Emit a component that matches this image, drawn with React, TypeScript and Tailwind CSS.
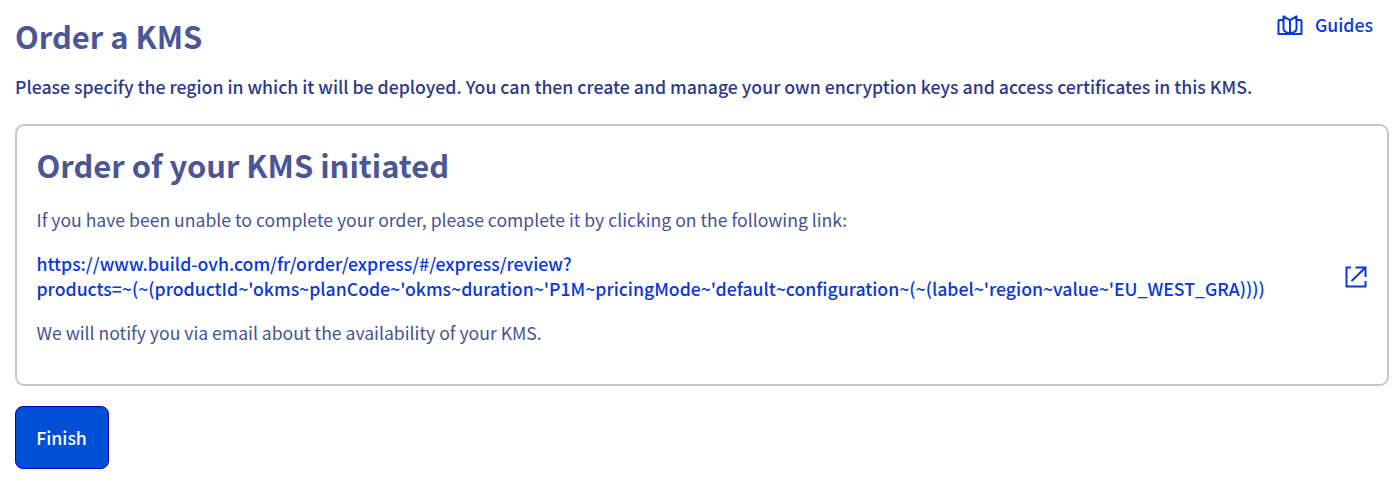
import React from "react";

function GuidesIcon() {
  return (
    <svg width="26" height="20" viewBox="0 0 26 20" fill="none" stroke="#0838d8" strokeWidth="2" strokeLinejoin="round" strokeLinecap="round">
      <path d="M6.500 5H2.500a1 1 0 0 0-1 1V19H24.500V6a1 1 0 0 0-1-1h-4" />
      <path d="M13 5.200 6.500 1.300V13.500c0 2.500 2 4 6.500 5 4.500-1 6.500-2.500 6.500-5V1.300L13 5.200V18" />
    </svg>
  );
}

function ExternalLinkIcon() {
  return (
    <svg width="22" height="22" viewBox="0 0 22 22" fill="none" stroke="#0838d8" strokeWidth="2">
      <path d="M6 1.500H1.500V20.500H20.500V15" />
      <path d="M10.500 1.500H20.500V11M20.500 1.500 6.500 15" />
    </svg>
  );
}

export default function App() {
  return (
    <main className="h-[492px] bg-white pl-[15px] pr-[11px] font-['Noto_Sans_CJK_SC',sans-serif] text-[#2b3a88]">
      <header className="flex items-start justify-between">
        <h1 className="pt-4 text-[30.9px] leading-10 font-bold text-[#4a5696]">Order a KMS</h1>
        <a className="mr-4 mt-[13px] flex items-center gap-3 text-[17.7px] leading-6 font-medium text-[#0838d8]">
          <GuidesIcon />
          <span className="-mt-px">Guides</span>
        </a>
      </header>
      <p className="mt-[19px] text-[17.66px] leading-6 font-medium whitespace-nowrap">Please specify the region in which it will be deployed. You can then create and manage your own encryption keys and access certificates in this KMS.</p>
      <section className="mt-[25px] h-[262px] rounded-[9px] border-2 border-[#c8c8c8] pr-[20.5px] pl-[19.5px] pt-[19px]">
        <h2 className="text-[30.9px] leading-10 font-bold text-[#4a5696]">Order of your KMS initiated</h2>
        <p className="mt-[23px] text-[17.6px] leading-6 font-normal text-[#465393]">If you have been unable to complete your order, please complete it by clicking on the following link:</p>
        <a className="mt-5 flex items-center justify-between text-[17.67px] leading-[24.5px] font-medium text-[#0838d8]">
          <span className="whitespace-nowrap">
            https://www.build-ovh.com/fr/order/express/#/express/review?
            <br />
            products=~(~(productId~'okms~planCode~'okms~duration~'P1M~pricingMode~'default~configuration~(~(label~'region~value~'EU_WEST_GRA))))
          </span>
          <ExternalLinkIcon />
        </a>
        <p className="mt-5 text-[17.6px] leading-6 font-normal text-[#465393]">We will notify you via email about the availability of your KMS.</p>
      </section>
      <button className="mt-5 h-[63px] w-[94px] rounded-lg border border-[#0000c8] bg-[#0050d7] pr-px pb-px text-[17.7px] leading-6 font-medium text-white">Finish</button>
    </main>
  );
}
